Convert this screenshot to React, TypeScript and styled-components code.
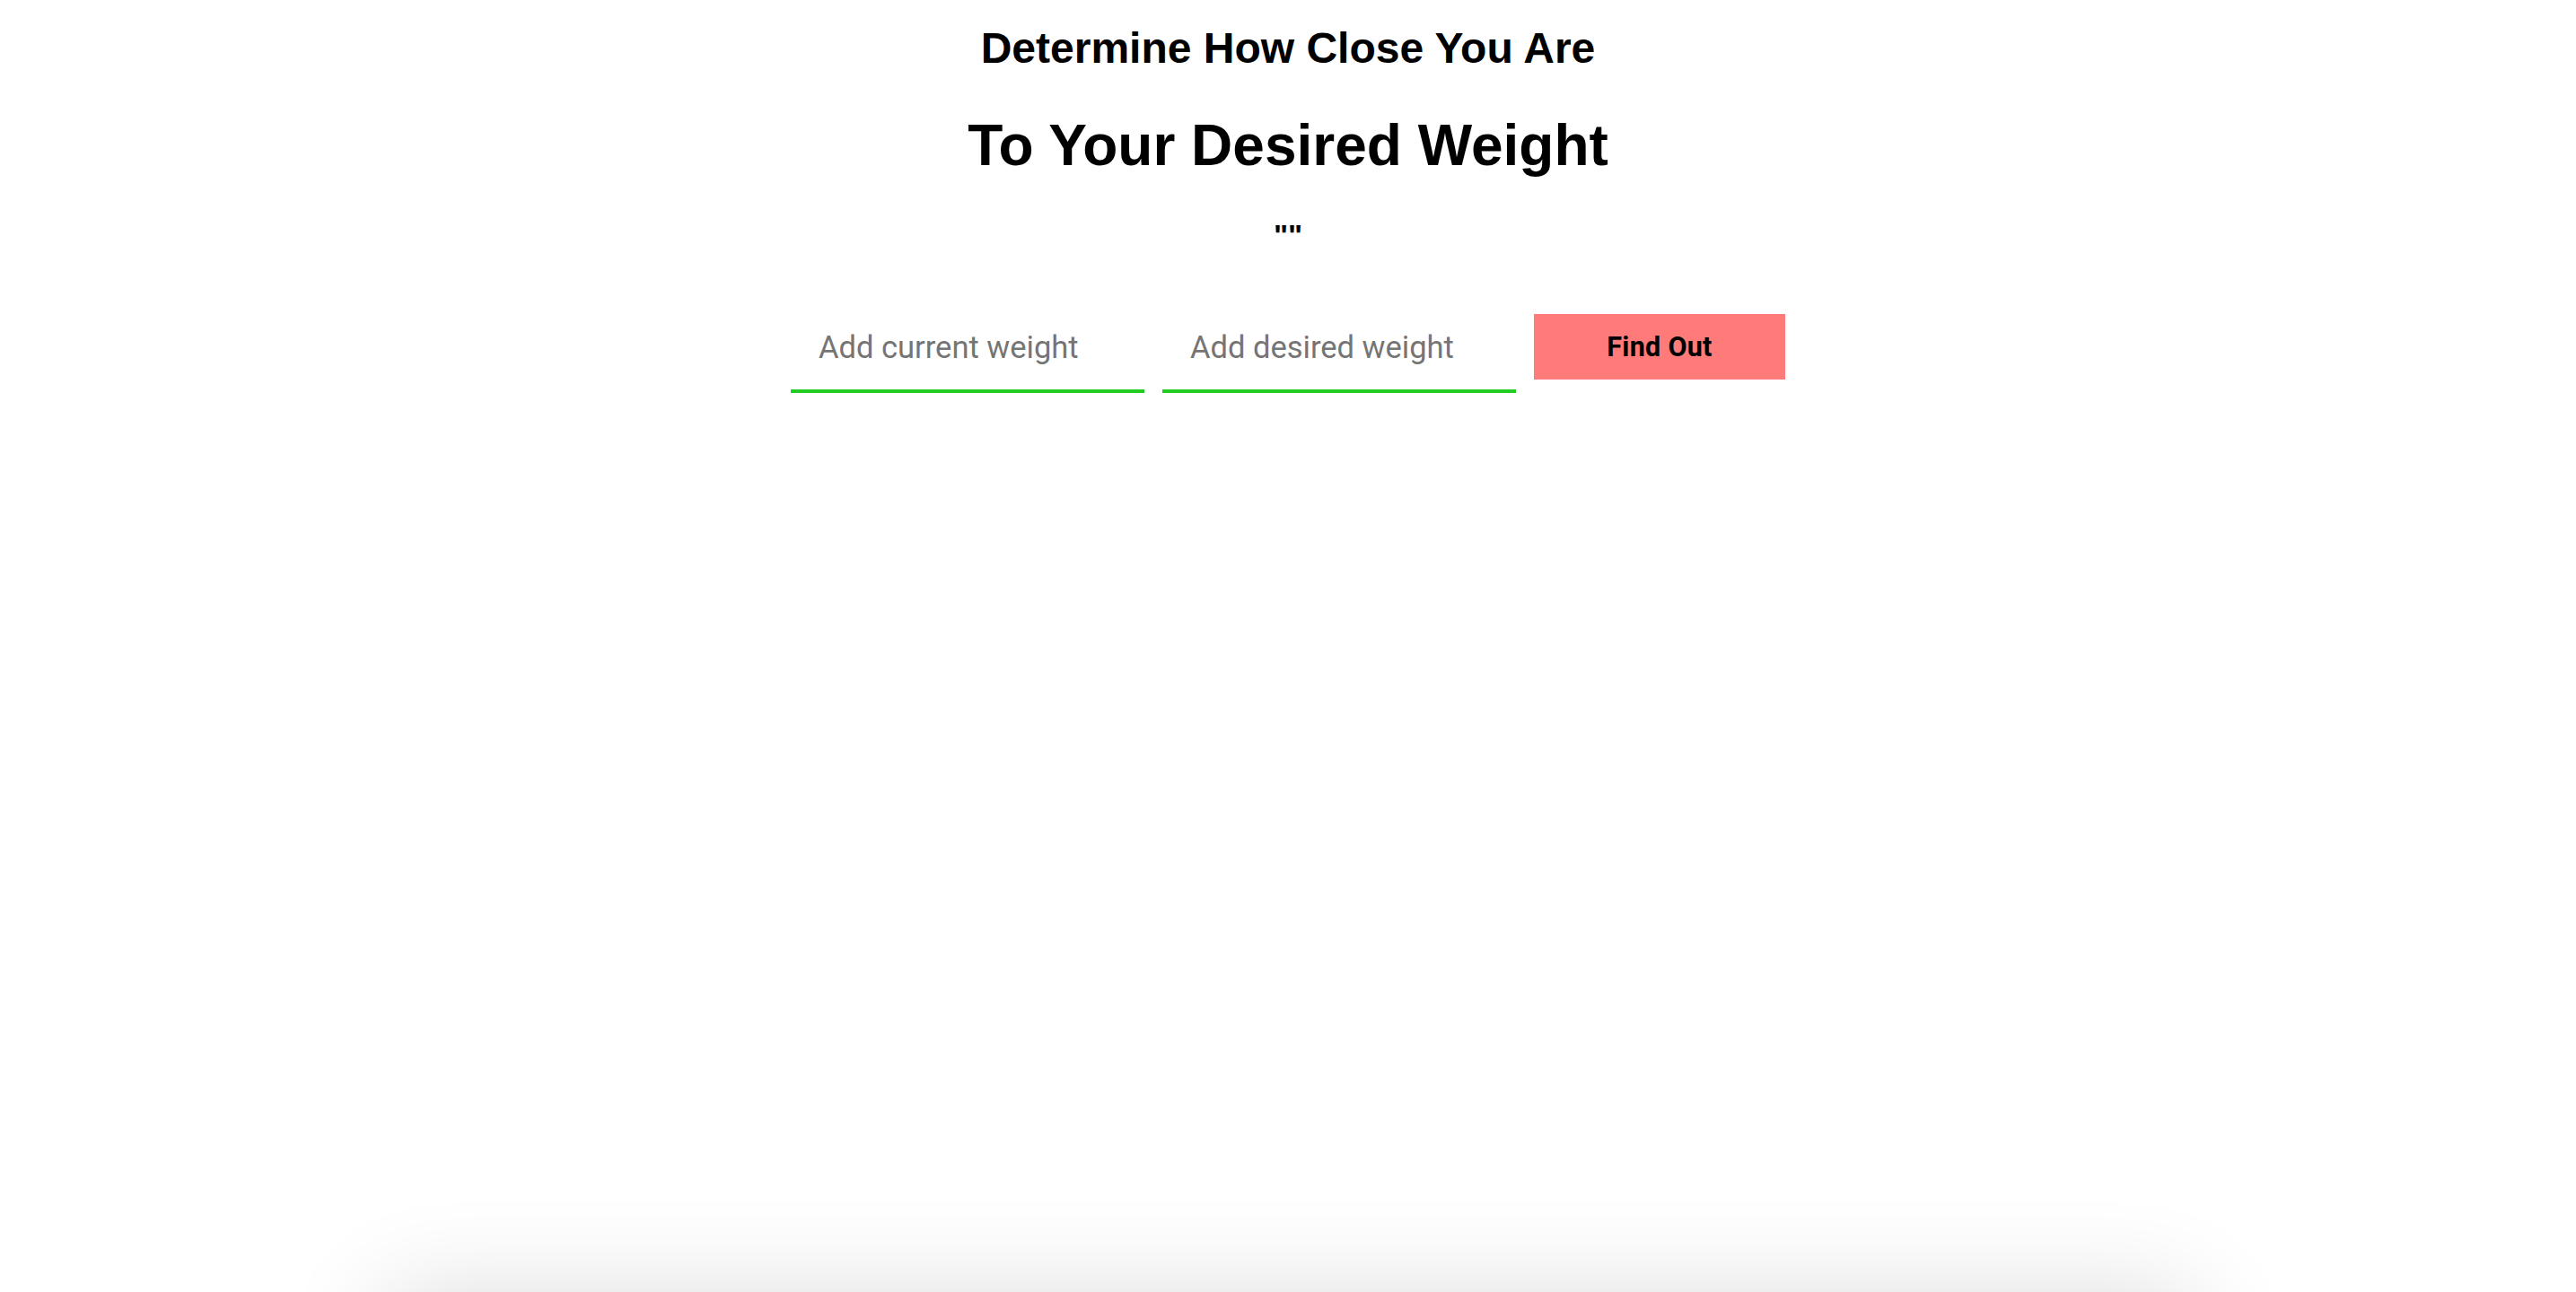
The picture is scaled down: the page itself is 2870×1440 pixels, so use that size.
import React from "react";
import styled, { createGlobalStyle } from "styled-components";

const GlobalStyle = createGlobalStyle`
  html, body {
    margin: 0;
    padding: 0;
    background: #ffffff;
    font-family: "Liberation Sans", Arial, sans-serif;
  }
  body {
    overflow: hidden;
  }
`;

const Page = styled.main`
  display: flex;
  flex-direction: column;
  align-items: center;
  width: 100%;
`;

const Subtitle = styled.h2`
  margin: 26px 0 0;
  font-family: "Liberation Sans", Arial, sans-serif;
  font-weight: 700;
  font-size: 48px;
  line-height: 55px;
  color: #000;
  text-align: center;
`;

const Title = styled.h1`
  margin: 44px 0 0;
  font-family: "Liberation Sans", Arial, sans-serif;
  font-weight: 700;
  font-size: 64px;
  line-height: 74px;
  color: #000;
  text-align: center;
`;

const Result = styled.p`
  margin: 44px 0 0;
  font-family: "Liberation Sans", Arial, sans-serif;
  font-weight: 700;
  font-size: 34px;
  line-height: 39px;
  color: #000;
  text-align: center;
`;

const Form = styled.form`
  display: flex;
  align-items: flex-start;
  gap: 20px;
  margin-top: 68px;
`;

const WeightInput = styled.input`
  box-sizing: border-box;
  width: 394px;
  height: 88px;
  padding: 0 0 10px 31px;
  border: none;
  border-bottom: 4px solid #22cc22;
  outline: none;
  background: transparent;
  font-family: Roboto, "Noto Sans", sans-serif;
  font-size: 34.5px;
  color: #222;

  &::placeholder {
    color: #757575;
  }
`;

const SubmitButton = styled.button`
  box-sizing: border-box;
  width: 280px;
  height: 73px;
  border: none;
  background: #ff7b79;
  font-family: Roboto, "Noto Sans", sans-serif;
  font-weight: 700;
  font-size: 30.5px;
  letter-spacing: 0.3px;
  color: #000;
  cursor: pointer;
`;

const ResultCard = styled.section`
  width: 70%;
  height: 400px;
  margin-top: 1012px;
  background: #ffffff;
  box-shadow: 0 0 110px rgba(0, 0, 0, 0.16);
`;

export default function App() {
  return (
    <>
      <GlobalStyle />
      <Page>
        <Subtitle>Determine How Close You Are</Subtitle>
        <Title>To Your Desired Weight</Title>
        <Result>""</Result>
        <Form onSubmit={(e) => e.preventDefault()}>
          <WeightInput type="text" placeholder="Add current weight" />
          <WeightInput type="text" placeholder="Add desired weight" />
          <SubmitButton type="submit">Find Out</SubmitButton>
        </Form>
        <ResultCard />
      </Page>
    </>
  );
}
